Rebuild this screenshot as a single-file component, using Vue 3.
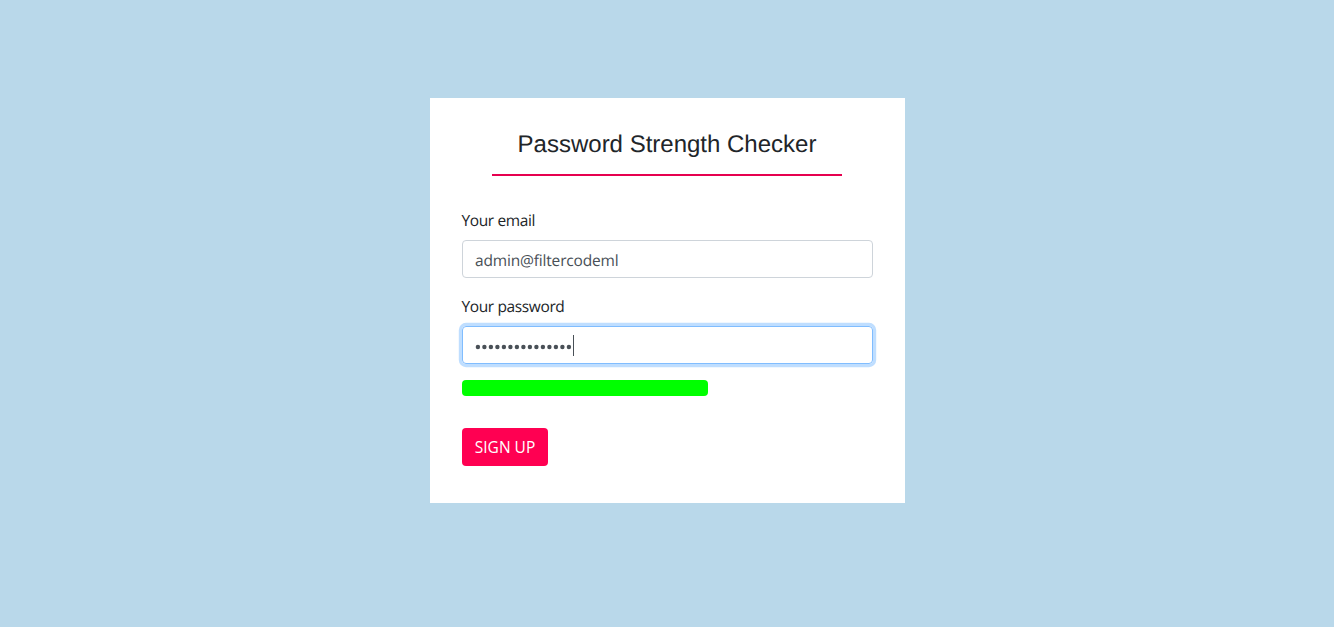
<script setup>
import { ref } from 'vue'

const email = ref('admin@filtercodeml')
const passwordLength = ref(15)
const strength = ref(60)
</script>

<template>
  <main class="page">
    <form class="card" @submit.prevent>
      <h1 class="title">Password Strength Checker</h1>
      <div class="group">
        <label class="label">Your email</label>
        <div class="field"><span class="email">{{ email }}</span></div>
      </div>
      <div class="group">
        <label class="label">Your password</label>
        <div class="field focused">
          <svg class="dots" width="98" height="6" viewBox="0 0 98 6">
            <circle v-for="n in passwordLength" :key="n" :cx="2.9 + (n - 1) * 6.5" cy="3" r="2.2" />
          </svg>
          <span class="caret"></span>
        </div>
      </div>
      <div class="meter"><div class="bar" :style="{ width: strength + '%' }"></div></div>
      <button class="submit" type="submit">SIGN UP</button>
    </form>
  </main>
</template>

<style>
body {
  margin: 0;
  background: #b9d8ea;
}
</style>

<style scoped>
.page {
  box-sizing: border-box;
  height: 627px;
  padding-top: 98px;
  background: #b9d8ea;
  font-family: "Open Sans", "Noto Sans", sans-serif;
  font-size: 16px;
  line-height: 24px;
  color: #212529;
  text-rendering: geometricPrecision;
}
.card {
  box-sizing: border-box;
  width: 475px;
  height: 405px;
  margin-left: 430px;
  padding: 32px;
  background: #fff;
}
.title {
  box-sizing: border-box;
  width: 350px;
  height: 46px;
  margin: 0 0 32px 30px;
  border-bottom: 2px solid #e6004f;
  font: 400 24px/29px "Liberation Sans", Arial, sans-serif;
  text-align: center;
}
.group {
  margin-bottom: 16px;
}
.label {
  display: block;
  height: 24px;
  margin: 0 0 8px -0.5px;
  font-size: 15.5px;
  letter-spacing: -0.38px;
}
.field {
  box-sizing: border-box;
  display: flex;
  align-items: center;
  height: 38px;
  padding: 2px 12px 0;
  border: 1px solid #ced4da;
  border-radius: 4px;
  color: #495057;
}
.email {
  font-size: 15.5px;
  letter-spacing: -0.17px;
}
.focused {
  border-color: #80bdff;
  box-shadow: 0 0 0 3.2px #bfdeff;
}
.dots {
  display: block;
  margin-top: 2px;
  fill: #495057;
}
.caret {
  width: 1px;
  height: 21px;
  margin-top: -1px;
  background: #495057;
}
.meter {
  width: 410px;
  height: 16px;
  margin-bottom: 32px;
}
.bar {
  height: 100%;
  border-radius: 4px;
  background: #0f0;
}
.submit {
  display: block;
  width: 86px;
  height: 38px;
  padding: 0;
  border: 0;
  border-radius: 4px;
  background: #ff0052;
  color: #fff;
  font: 400 15.5px/24px "Open Sans", "Noto Sans", sans-serif;
}
</style>
